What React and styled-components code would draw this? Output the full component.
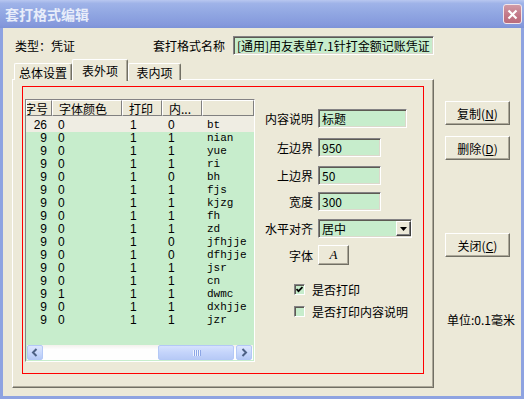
import React from 'react';
import styled, { createGlobalStyle } from 'styled-components';

const GlobalStyle = createGlobalStyle`
  html, body {
    margin: 0;
    padding: 0;
    background: #ece9d8;
  }
  body {
    font-family: "Noto Sans CJK SC", "Liberation Sans", sans-serif;
    font-size: 12px;
    color: #000;
  }
`;

const Window = styled.div`
  width: 524px;
  height: 399px;
  display: flex;
  flex-direction: column;
  overflow: hidden;
`;

const TitleBar = styled.div`
  height: 28px;
  flex: none;
  display: flex;
  align-items: center;
  justify-content: space-between;
  padding: 0 2px 0 5px;
  background: linear-gradient(to bottom, #b8c7f0 0%, #9fb3e8 12%, #90a6e2 50%, #8599dc 88%, #7d93d8 100%);
`;

const Title = styled.span`
  color: #e8edfa;
  font-weight: bold;
  font-size: 14px;
`;

const CloseBox = styled.div`
  width: 19px;
  height: 20px;
  box-sizing: border-box;
  border: 1px solid #f2e6ea;
  border-radius: 3px;
  background: linear-gradient(to bottom, #d09aa6, #c27686 60%, #b96c7c);
  display: flex;
  align-items: center;
  justify-content: center;
`;

const Body = styled.div`
  flex: 1;
  display: flex;
  padding: 8px 0 0 9px;
  border: 3px solid #8ea3e1;
  border-top: none;
`;

const LeftCol = styled.div`
  width: 422px;
  display: flex;
  flex-direction: column;
`;

const TopRow = styled.div`
  height: 19px;
  display: flex;
  align-items: center;
`;

const Caption = styled.span`
  width: ${({ $w }) => $w}px;
  padding-left: ${({ $pl }) => $pl || 0}px;
  flex: none;
  white-space: nowrap;
`;

const Sunken = styled.div`
  box-sizing: border-box;
  height: ${({ $h }) => $h || 19}px;
  width: ${({ $w }) => ($w ? `${$w}px` : 'auto')};
  flex: ${({ $w }) => ($w ? 'none' : '1')};
  background: #c7edcc;
  border-top: 1px solid #848284;
  border-left: 1px solid #848284;
  border-bottom: 1px solid #ffffff;
  border-right: 1px solid #ffffff;
  box-shadow: inset 1px 1px 0 #5c5a52, inset -1px -1px 0 #dcd9cc;
  display: flex;
  align-items: center;
  padding-left: 3px;
  white-space: nowrap;
  overflow: hidden;
`;

const TabRow = styled.div`
  margin-top: 4px;
  height: 21px;
  display: flex;
  align-items: flex-end;
  padding-left: 2px;
  position: relative;
  z-index: 1;
`;

const Tab = styled.div`
  box-sizing: border-box;
  width: ${({ $w }) => $w}px;
  height: ${({ $active }) => ($active ? 22 : 17)}px;
  margin-bottom: ${({ $active }) => ($active ? -1 : 0)}px;
  padding-top: ${({ $active }) => ($active ? 2 : 1)}px;
  background: #ece9d8;
  border-top: 1px solid #ffffff;
  border-left: 1px solid #ffffff;
  border-right: 1px solid #716f64;
  box-shadow: inset -1px 0 0 #aca899;
  border-radius: 2px 2px 0 0;
  display: flex;
  justify-content: center;
  align-items: ${({ $active }) => ($active ? 'flex-start' : 'center')};
  white-space: nowrap;
`;

const Panel = styled.div`
  margin-top: -1px;
  height: 309px;
  box-sizing: border-box;
  border-top: 1px solid #ffffff;
  border-left: 1px solid #ffffff;
  border-right: 1px solid #716f64;
  border-bottom: 1px solid #716f64;
  box-shadow: inset -1px -1px 0 #aca899;
  padding: 6px 9px 13px 9px;
  display: flex;
`;

const RedBox = styled.div`
  flex: 1;
  border: 1px solid #ff0000;
  padding: 12px 0 11px 2px;
  display: flex;
`;

const ListView = styled.div`
  width: 230px;
  box-sizing: border-box;
  border-top: 1px solid #848284;
  border-left: 1px solid #848284;
  border-bottom: 1px solid #ffffff;
  border-right: 1px solid #ffffff;
  display: flex;
  flex-direction: column;
  background: #c7edcc;
  overflow: hidden;
`;

const cols = '26px 70px 40px 40px 1fr';

const HeaderRow = styled.div`
  display: grid;
  grid-template-columns: ${cols};
  height: 16px;
  flex: none;
  background: #ece9d8;
`;

const HeadCell = styled.div`
  box-sizing: border-box;
  border-top: 1px solid #ffffff;
  border-left: 1px solid #ffffff;
  border-right: 1px solid #808080;
  border-bottom: 1px solid #808080;
  display: flex;
  align-items: center;
  justify-content: ${({ $right }) => ($right ? 'flex-end' : 'flex-start')};
  padding: ${({ $right }) => ($right ? '0 3px 0 0' : '0 0 0 6px')};
  white-space: nowrap;
  overflow: hidden;
`;

const RowsArea = styled.div`
  flex: 1;
  background: #c7edcc;
`;

const Row = styled.div`
  display: grid;
  grid-template-columns: ${cols};
  height: 13px;
  line-height: 13px;
  padding-top: ${({ $first }) => ($first ? 3 : 0)}px;
  background: ${({ $first }) => ($first ? '#efede3' : 'transparent')};
`;

const Cell = styled.span`
  font-family: ${({ $mono }) => ($mono ? '"Liberation Mono", monospace' : '"Liberation Sans", sans-serif')};
  font-size: ${({ $mono }) => ($mono ? 11 : 12)}px;
  text-align: ${({ $right }) => ($right ? 'right' : 'left')};
  padding-left: ${({ $pl }) => $pl || 0}px;
  padding-right: ${({ $pr }) => $pr || 0}px;
  white-space: nowrap;
`;

const ScrollBar = styled.div`
  height: 15px;
  flex: none;
  margin: 0 1px 1px 1px;
  display: flex;
  background: linear-gradient(to bottom, #f3f1ec, #fefefe 30%, #fefefe);
`;

const ScrollBtn = styled.div`
  width: 16px;
  box-sizing: border-box;
  border: 1px solid #b4c8f6;
  border-radius: 2px;
  background: linear-gradient(to bottom, #dde7fd, #c6d6fb 60%, #b5c9f5);
  display: flex;
  align-items: center;
  justify-content: center;
  margin-right: ${({ $end }) => ($end ? 1 : 0)}px;
`;

const Thumb = styled.div`
  width: 76px;
  margin-left: auto;
  margin-right: 2px;
  box-sizing: border-box;
  border: 1px solid #b4c8f6;
  border-radius: 2px;
  background: linear-gradient(to bottom, #d6e2fd, #c4d4fb 50%, #b7caf6);
  display: flex;
  align-items: center;
  justify-content: center;
  gap: 1px;
`;

const Grip = styled.span`
  width: 1px;
  height: 6px;
  background: #eef3fe;
  box-shadow: 1px 0 0 #8ca6e6;
`;

const Form = styled.div`
  flex: 1;
  padding-top: 10px;
  display: flex;
  flex-direction: column;
`;

const Field = styled.div`
  display: flex;
  align-items: center;
  gap: 5px;
  margin-top: ${({ $mt }) => $mt || 0}px;
`;

const FieldLabel = styled.span`
  width: 58px;
  flex: none;
  text-align: right;
  white-space: nowrap;
`;

const DropBtn = styled.div`
  margin-left: auto;
  width: 15px;
  height: 15px;
  box-sizing: border-box;
  background: #ece9d8;
  border-top: 1px solid #ffffff;
  border-left: 1px solid #ffffff;
  border-right: 1px solid #404040;
  border-bottom: 1px solid #404040;
  box-shadow: inset -1px -1px 0 #808080;
  display: flex;
  align-items: center;
  justify-content: center;
`;

const RaisedButton = styled.div`
  box-sizing: border-box;
  width: ${({ $w }) => $w}px;
  height: ${({ $h }) => $h}px;
  background: #ece9d8;
  border-top: 1px solid #ffffff;
  border-left: 1px solid #ffffff;
  border-right: 1px solid #716f64;
  border-bottom: 1px solid #716f64;
  box-shadow: inset -1px -1px 0 #aca899;
  display: flex;
  align-items: center;
  justify-content: center;
  white-space: nowrap;
  margin-top: ${({ $mt }) => $mt || 0}px;
  flex: none;
`;

const FontGlyph = styled.span`
  font-family: "Liberation Serif", serif;
  font-style: italic;
  font-size: 13px;
`;

const CheckRow = styled.div`
  display: flex;
  align-items: center;
  gap: 7px;
  margin-left: 39px;
  margin-top: ${({ $mt }) => $mt}px;
  height: 11px;
`;

const CheckBox = styled.div`
  width: 11px;
  height: 11px;
  box-sizing: border-box;
  background: #c7edcc;
  border-top: 1px solid #848284;
  border-left: 1px solid #848284;
  border-bottom: 1px solid #ffffff;
  border-right: 1px solid #ffffff;
  box-shadow: inset 1px 1px 0 #5c5a52;
  display: flex;
  align-items: center;
  justify-content: center;
`;

const RightCol = styled.div`
  width: 65px;
  margin-left: 11px;
  padding-top: 65px;
  display: flex;
  flex-direction: column;
`;

const Unit = styled.div`
  margin-top: 54px;
  padding-left: 2px;
  white-space: nowrap;
`;

const rows = [
  ['26', '0', '1', '0', 'bt'],
  ['9', '0', '1', '1', 'nian'],
  ['9', '0', '1', '1', 'yue'],
  ['9', '0', '1', '1', 'ri'],
  ['9', '0', '1', '0', 'bh'],
  ['9', '0', '1', '1', 'fjs'],
  ['9', '0', '1', '1', 'kjzg'],
  ['9', '0', '1', '1', 'fh'],
  ['9', '0', '1', '1', 'zd'],
  ['9', '0', '1', '0', 'jfhjje'],
  ['9', '0', '1', '0', 'dfhjje'],
  ['9', '0', '1', '1', 'jsr'],
  ['9', '0', '1', '1', 'cn'],
  ['9', '1', '1', '1', 'dwmc'],
  ['9', '0', '1', '1', 'dxhjje'],
  ['9', '0', '1', '1', 'jzr'],
];

const Chevron = ({ dir }) => (
  <svg width="8" height="9" viewBox="0 0 8 9">
    <path
      d={dir === 'left' ? 'M5.5 1 L2 4.5 L5.5 8' : 'M2.5 1 L6 4.5 L2.5 8'}
      fill="none"
      stroke="#4d6185"
      strokeWidth="2"
    />
  </svg>
);

export default function App() {
  return (
    <>
      <GlobalStyle />
      <Window>
        <TitleBar>
          <Title>套打格式编辑</Title>
          <CloseBox>
            <svg width="11" height="11" viewBox="0 0 11 11">
              <path d="M1.5 1.5 L9.5 9.5 M9.5 1.5 L1.5 9.5" stroke="#fff" strokeWidth="2.2" />
            </svg>
          </CloseBox>
        </TitleBar>
        <Body>
          <LeftCol>
            <TopRow>
              <Caption $w={138} $pl={3}>类型：凭证</Caption>
              <Caption $w={80}>套打格式名称</Caption>
              <Sunken>[通用]用友表单7.1针打金额记账凭证</Sunken>
            </TopRow>
            <TabRow>
              <Tab $w={58}>总体设置</Tab>
              <Tab $w={56} $active>表外项</Tab>
              <Tab $w={53}>表内项</Tab>
            </TabRow>
            <Panel>
              <RedBox>
                <ListView>
                  <HeaderRow>
                    <HeadCell $right>字号</HeadCell>
                    <HeadCell>字体颜色</HeadCell>
                    <HeadCell>打印</HeadCell>
                    <HeadCell>内...</HeadCell>
                    <HeadCell />
                  </HeaderRow>
                  <RowsArea>
                    {rows.map((r, i) => (
                      <Row key={r[4]} $first={i === 0}>
                        <Cell $right $pr={5}>{r[0]}</Cell>
                        <Cell $pl={6}>{r[1]}</Cell>
                        <Cell $pl={8}>{r[2]}</Cell>
                        <Cell $pl={6}>{r[3]}</Cell>
                        <Cell $pl={5} $mono>{r[4]}</Cell>
                      </Row>
                    ))}
                  </RowsArea>
                  <ScrollBar>
                    <ScrollBtn><Chevron dir="left" /></ScrollBtn>
                    <Thumb>
                      <Grip /><Grip /><Grip /><Grip />
                    </Thumb>
                    <ScrollBtn $end><Chevron dir="right" /></ScrollBtn>
                  </ScrollBar>
                </ListView>
                <Form>
                  <Field>
                    <FieldLabel>内容说明</FieldLabel>
                    <Sunken $w={89}>标题</Sunken>
                  </Field>
                  <Field $mt={10}>
                    <FieldLabel>左边界</FieldLabel>
                    <Sunken $w={63}>950</Sunken>
                  </Field>
                  <Field $mt={9}>
                    <FieldLabel>上边界</FieldLabel>
                    <Sunken $w={63}>50</Sunken>
                  </Field>
                  <Field $mt={7}>
                    <FieldLabel>宽度</FieldLabel>
                    <Sunken $w={63}>300</Sunken>
                  </Field>
                  <Field $mt={8}>
                    <FieldLabel>水平对齐</FieldLabel>
                    <Sunken $w={94}>
                      居中
                      <DropBtn>
                        <svg width="7" height="4" viewBox="0 0 7 4">
                          <path d="M0 0 H7 L3.5 4 Z" fill="#000" />
                        </svg>
                      </DropBtn>
                    </Sunken>
                  </Field>
                  <Field $mt={7}>
                    <FieldLabel>字体</FieldLabel>
                    <RaisedButton $w={31} $h={20}><FontGlyph>A</FontGlyph></RaisedButton>
                  </Field>
                  <CheckRow $mt={19}>
                    <CheckBox>
                      <svg width="7" height="7" viewBox="0 0 7 7">
                        <path d="M0.5 3 L2.5 5.2 L6.5 1" fill="none" stroke="#000" strokeWidth="1.8" />
                      </svg>
                    </CheckBox>
                    是否打印
                  </CheckRow>
                  <CheckRow $mt={11}>
                    <CheckBox />
                    是否打印内容说明
                  </CheckRow>
                </Form>
              </RedBox>
            </Panel>
          </LeftCol>
          <RightCol>
            <RaisedButton $w={65} $h={24}>复制(<u>N</u>)</RaisedButton>
            <RaisedButton $w={65} $h={24} $mt={11}>删除(<u>D</u>)</RaisedButton>
            <RaisedButton $w={65} $h={24} $mt={73}>关闭(<u>C</u>)</RaisedButton>
            <Unit>单位:0.1毫米</Unit>
          </RightCol>
        </Body>
      </Window>
    </>
  );
}
